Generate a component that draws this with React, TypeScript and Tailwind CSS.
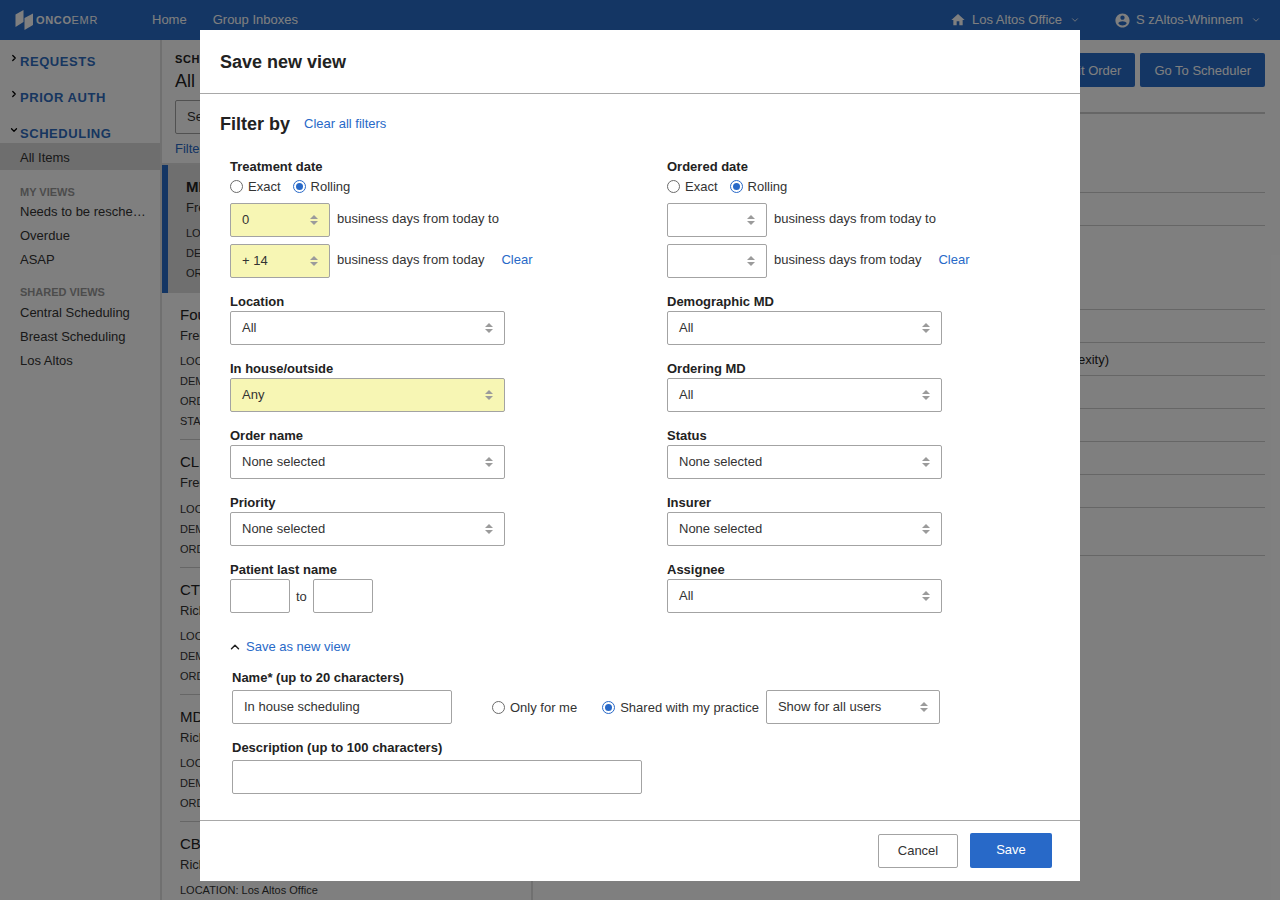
import React from 'react';
import { ChevronDown, ChevronRight, ChevronUp } from 'lucide-react';

const listItems = [
  { title: 'MRI Brain', who: 'Fred Smith', meta: ['LOCATION: Los Altos Office', 'DEMOGRAPHIC MD: Lee', 'ORDERING MD: Lee'], active: true },
  { title: 'Fourth Line', who: 'Fred Smith', meta: ['LOCATION: Los Altos Office', 'DEMOGRAPHIC MD: Lee', 'ORDERING MD: Lee', 'STATUS: New'] },
  { title: 'CL Panel', who: 'Fred Smith', meta: ['LOCATION: Los Altos Office', 'DEMOGRAPHIC MD: Lee', 'ORDERING MD: Lee'] },
  { title: 'CT Chest', who: 'Rick Jones', meta: ['LOCATION: Los Altos Office', 'DEMOGRAPHIC MD: Lee', 'ORDERING MD: Lee'] },
  { title: 'MD Visit', who: 'Rick Jones', meta: ['LOCATION: Los Altos Office', 'DEMOGRAPHIC MD: Lee', 'ORDERING MD: Lee'] },
  { title: 'CBC', who: 'Rick Jones', meta: ['LOCATION: Los Altos Office'] },
];

const detailRows = [79, 33, 84, 33, 33, 33, 33, 33, 33, 48];

const SortIcon = () => (
  <svg width="8" height="12" viewBox="0 0 8 12" className="shrink-0">
    <path d="M4 1 L8 5 H0 Z M0 7 H8 L4 11 Z" fill="#9b9b9b" />
  </svg>
);

const Select = ({ value, className }: { value: string; className: string }) => (
  <div className={`flex h-[34px] items-center justify-between rounded-[2px] border border-[#a3a3a3] pl-[11px] pr-[11px] text-[13px] text-[#333] ${className}`}>
    <span>{value}</span>
    <SortIcon />
  </div>
);

const Radio = ({ checked, label }: { checked?: boolean; label: string }) => (
  <label className="flex items-center gap-[5px] text-[13px] text-[#333]">
    {checked ? (
      <span className="flex h-[13px] w-[13px] items-center justify-center rounded-full border-[1.5px] border-[#2869c8]">
        <span className="h-[7px] w-[7px] rounded-full bg-[#2869c8]" />
      </span>
    ) : (
      <span className="h-[13px] w-[13px] rounded-full border-[1.5px] border-[#6b6b6b]" />
    )}
    <span className="pt-px">{label}</span>
  </label>
);

const Label = ({ children, className = 'pt-[2px]' }: { children: React.ReactNode; className?: string }) => (
  <div className={`flex h-[20px] items-center text-[13px] font-bold text-[#222] ${className}`}>{children}</div>
);

const Field = ({ label, value, hl }: { label: string; value: string; hl?: boolean }) => (
  <div className="mt-[13px]">
    <Label>{label}</Label>
    <Select value={value} className={`w-[275px] ${hl ? 'bg-[#f7f6b4]' : ''}`} />
  </div>
);

const DateFilter = ({ label, from, to, hl }: { label: string; from: string; to: string; hl?: boolean }) => (
  <div>
    <Label>{label}</Label>
    <div className="flex h-[20px] items-center gap-[12px]">
      <Radio label="Exact" />
      <Radio checked label="Rolling" />
    </div>
    <div className="mt-[7px] flex items-center gap-[7px] text-[13px] text-[#333]">
      <Select value={from} className={`w-[100px] ${hl ? 'bg-[#f7f6b4]' : ''}`} />
      <span className="pb-[2px]">business days from today to</span>
    </div>
    <div className="mt-[7px] flex items-center gap-[7px] text-[13px] text-[#333]">
      <Select value={to} className={`w-[100px] ${hl ? 'bg-[#f7f6b4]' : ''}`} />
      <span className="pb-[2px]">business days from today</span>
      <a className="ml-[10px] pb-[2px] text-[#2869c8]">Clear</a>
    </div>
  </div>
);

const SideHead = ({ label, open }: { label: string; open?: boolean }) => (
  <div className="flex h-[20px] items-center">
    <span className="flex w-[20px] justify-center pb-[6px] pl-[8px]">
      {open ? <ChevronDown size={10} strokeWidth={3} className="text-black" /> : <ChevronRight size={10} strokeWidth={3} className="text-black" />}
    </span>
    <span className="pt-[2px] text-[13px] font-bold tracking-[0.55px] text-[#2f6cc0]">{label}</span>
  </div>
);

export default function App() {
  return (
    <div className="relative h-[900px] w-[1280px] overflow-hidden bg-white font-['Liberation_Sans',Arial,sans-serif]">
      <header className="flex h-[40px] items-center bg-[#286cc8] text-white">
        <div className="flex w-[152px] items-center pl-[15px]">
          <svg width="18" height="20" viewBox="0 0 18 20" className="shrink-0" fill="#fff">
            <path d="M0.5 4.5 L8.5 0 V12 L0.5 17 Z" />
            <path d="M9.5 8 L18 3.5 V15 L9.5 20 Z" />
          </svg>
          <span className="ml-[3px] text-[11px] tracking-[0.65px]">
            <span className="font-bold">ONCO</span>EMR
          </span>
        </div>
        <a className="text-[13px]">Home</a>
        <a className="ml-[26px] text-[13px]">Group Inboxes</a>
        <div className="ml-auto flex items-center text-[13px]">
          <svg width="16" height="16" viewBox="0 0 24 24" fill="#fff">
            <path d="M10 20v-6h4v6h5v-8h3L12 3 2 12h3v8z" />
          </svg>
          <span className="ml-[6px]">Los Altos Office</span>
          <ChevronDown size={10} strokeWidth={2} className="ml-[8px]" />
          <svg width="17" height="17" viewBox="0 0 24 24" fill="#fff" className="ml-[34px]">
            <path d="M12 2C6.48 2 2 6.48 2 12s4.48 10 10 10 10-4.48 10-10S17.52 2 12 2zm0 3c1.66 0 3 1.34 3 3s-1.34 3-3 3-3-1.34-3-3 1.34-3 3-3zm0 14.2c-2.5 0-4.71-1.28-6-3.22.03-1.99 4-3.08 6-3.08 1.99 0 5.97 1.09 6 3.08-1.29 1.94-3.5 3.22-6 3.22z" />
          </svg>
          <span className="ml-[5px]">S zAltos-Whinnem</span>
          <ChevronDown size={10} strokeWidth={2} className="ml-[8px] mr-[19px]" />
        </div>
      </header>

      <div className="flex h-[860px]">
        <aside className="w-[162px] shrink-0 border-r-2 border-[#e0e0e0] bg-white pt-[11px]">
          <SideHead label="REQUESTS" />
          <div className="mt-[16px]"><SideHead label="PRIOR AUTH" /></div>
          <div className="mt-[16px]"><SideHead label="SCHEDULING" open /></div>
          <div className="flex h-[27px] items-center bg-[#dcdcdc] pl-[20px] pt-[2px] text-[13px] text-[#333]">All Items</div>
          <div className="mt-[14px] pl-[20px] text-[11px] font-bold text-[#999]">MY VIEWS</div>
          <div className="mt-[-1px] flex flex-col pl-[20px] text-[13px] leading-[24px] text-[#333]">
            <span>Needs to be resche…</span>
            <span>Overdue</span>
            <span>ASAP</span>
          </div>
          <div className="mt-[12px] pl-[20px] text-[11px] font-bold text-[#999]">SHARED VIEWS</div>
          <div className="mt-[1px] flex flex-col pl-[20px] text-[13px] leading-[24px] text-[#333]">
            <span>Central Scheduling</span>
            <span>Breast Scheduling</span>
            <span>Los Altos</span>
          </div>
        </aside>

        <section className="w-[371px] shrink-0 border-r-2 border-[#e0e0e0]">
          <div className="h-[125px] border-b-2 border-[#e0e0e0] pl-[13px] pt-[13px]">
            <div className="text-[11px] font-bold leading-[13px] tracking-[0.6px] text-[#222]">SCHEDULING</div>
            <div className="mt-[2px] text-[18px] leading-[26px] text-[#222]">All Items</div>
            <div className="mt-[6px] flex h-[34px] w-[300px] items-center rounded-[2px] border border-[#a3a3a3] pl-[11px] text-[13px] text-[#333]">Search</div>
            <div className="mt-[5px] text-[13px] text-[#2869c8]">Filter by</div>
          </div>
          {listItems.map((item) => (
            <div key={item.title} className={`${item.active ? 'border-l-[6px] border-[#286cc8] bg-[#dedede] pl-[18px]' : 'pl-[18px]'}`}>
              <div className={`${item.active ? 'h-[128px]' : 'border-b border-[#ccc]'} pb-[8px] pt-[13px]`}>
                <div className={`text-[15px] leading-[18px] text-[#222] ${item.active ? 'font-bold' : ''}`}>{item.title}</div>
                <div className="mt-[3px] text-[13px] leading-[18px] text-[#333]">{item.who}</div>
                <div className="mt-[6.3px] flex flex-col text-[11px] leading-[20px] text-[#333]">
                  {item.meta.map((m) => <span key={m}>{m}</span>)}
                </div>
              </div>
            </div>
          ))}
        </section>

        <main className="flex-1 pr-[15px]">
          <div className="flex h-[74px] items-start justify-end gap-[5px] border-b-2 border-[#ccc] pt-[13px]">
            <button className="h-[34px] rounded-[2px] bg-[#286cc8] px-[14px] pt-px text-[13px] text-white">Edit Order</button>
            <button className="h-[34px] rounded-[2px] bg-[#286cc8] px-[14px] pt-px text-[13px] text-white">Go To Scheduler</button>
          </div>
          {detailRows.map((h, i) => (
            <div key={i} style={{ height: h }} className="flex items-center justify-end border-b border-[#ccc] pr-[156px] pt-px text-[13px] text-[#222]">
              {i === 4 ? 'Moderate complexity)' : ''}
            </div>
          ))}
        </main>
      </div>

      <div className="absolute inset-0 bg-black/50" />

      <div className="absolute left-[200px] top-[30px] w-[880px] bg-white">
        <div className="flex h-[64px] items-center border-b border-[#a8a8a8] pl-[20px] pt-[2px] text-[18px] font-bold text-[#222]">Save new view</div>

        <div className="mt-[18px] flex h-[24px] items-center gap-[14px] pl-[20px]">
          <span className="text-[18px] font-bold text-[#222]">Filter by</span>
          <a className="text-[13px] text-[#2869c8]">Clear all filters</a>
        </div>

        <div className="mt-[20px] grid grid-cols-[437px_1fr] pl-[30px]">
          <div>
            <DateFilter label="Treatment date" from="0" to="+ 14" hl />
            <Field label="Location" value="All" />
            <Field label="In house/outside" value="Any" hl />
            <Field label="Order name" value="None selected" />
            <Field label="Priority" value="None selected" />
            <div className="mt-[13px]">
              <Label>Patient last name</Label>
              <div className="flex items-center text-[13px] text-[#333]">
                <input className="h-[34px] w-[60px] rounded-[2px] border border-[#a3a3a3]" />
                <span className="mx-[6px] pt-px">to</span>
                <input className="h-[34px] w-[60px] rounded-[2px] border border-[#a3a3a3]" />
              </div>
            </div>
          </div>
          <div>
            <DateFilter label="Ordered date" from="" to="" />
            <Field label="Demographic MD" value="All" />
            <Field label="Ordering MD" value="All" />
            <Field label="Status" value="None selected" />
            <Field label="Insurer" value="None selected" />
            <Field label="Assignee" value="All" />
          </div>
        </div>

        <div className="mt-[24px] flex h-[20px] items-center gap-[4px] pl-[28px] text-[13px] text-[#2869c8]">
          <ChevronUp size={14} strokeWidth={2.5} className="text-[#222]" />
          <a>Save as new view</a>
        </div>

        <div className="mt-[13px] pl-[32px]">
          <Label className="pb-[4px]">Name* (up to 20 characters)</Label>
          <div className="flex items-center">
            <input readOnly value="In house scheduling" className="h-[34px] w-[220px] rounded-[2px] border border-[#a3a3a3] pb-[2px] pl-[11px] text-[13px] text-[#333]" />
            <div className="ml-[40px]"><Radio label="Only for me" /></div>
            <div className="ml-[25px]"><Radio checked label="Shared with my practice" /></div>
            <Select value="Show for all users" className="ml-[7px] w-[174px]" />
          </div>
          <div className="mt-[16px]">
            <Label className="pb-[4px]">Description (up to 100 characters)</Label>
            <input className="h-[34px] w-[410px] rounded-[2px] border border-[#a3a3a3]" />
          </div>
        </div>

        <div className="mt-[26px] flex h-[61px] items-start justify-end gap-[12px] border-t border-[#a8a8a8] pr-[28px] pt-[12px]">
          <button className="mt-[1px] h-[34px] w-[80px] rounded-[2px] border border-[#a3a3a3] text-[13px] text-[#333]">Cancel</button>
          <button className="h-[35px] w-[82px] rounded-[2px] bg-[#2869c8] pb-[2px] text-[13px] text-white">Save</button>
        </div>
      </div>
    </div>
  );
}
